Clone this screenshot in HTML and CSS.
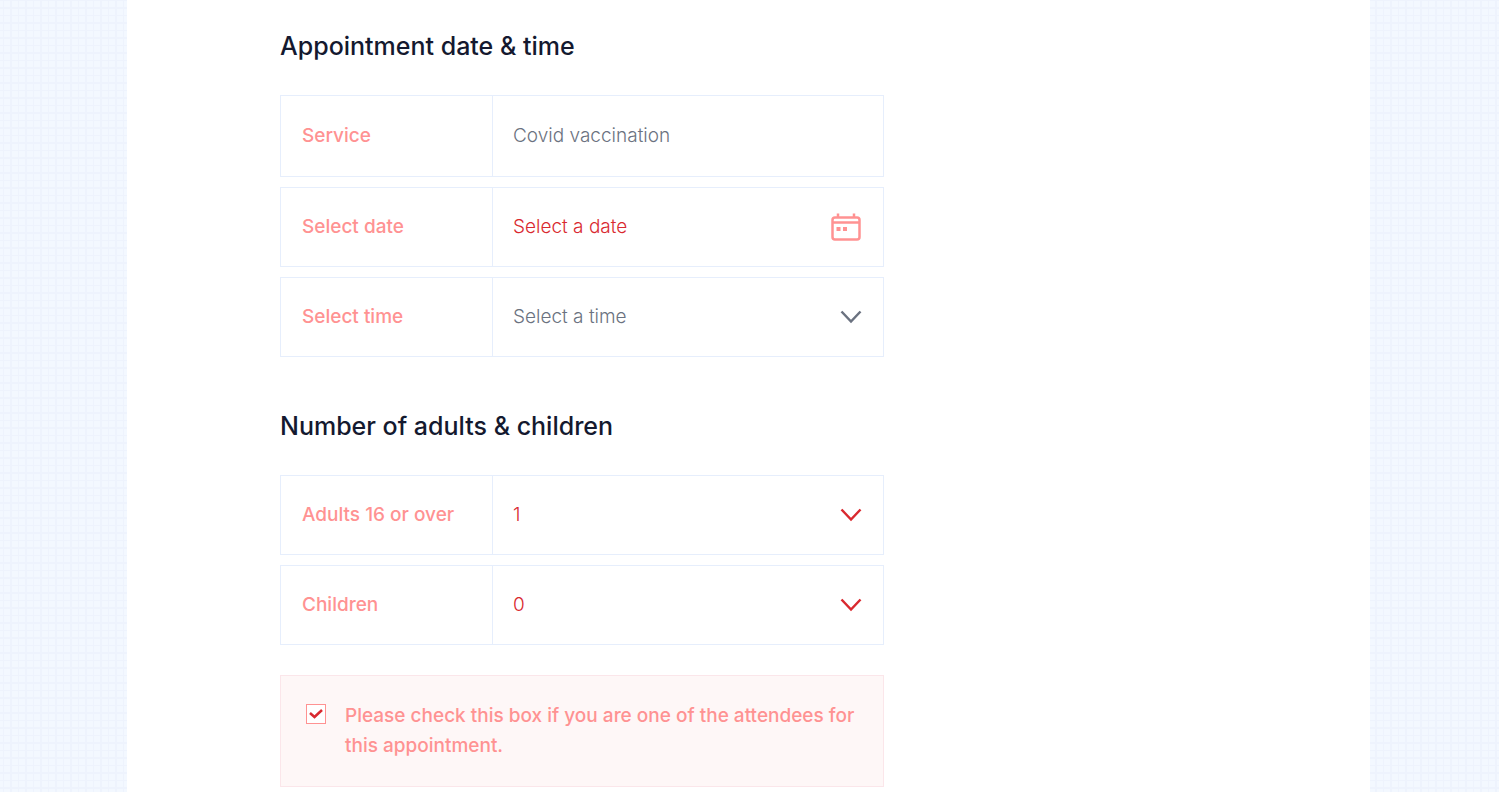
FILE: index.html
```html
<!DOCTYPE html>
<html lang="en">
<head>
    <meta charset="UTF-8">
    <meta name="viewport" content="width=device-width, initial-scale=1.0">
    <title>Book Appointment</title>
    <link rel="stylesheet" href="styles.css">
</head>
<body>
    <div class="page">
        <main class="panel">
            <form id="appointmentForm" class="booking-form">
                <h2>Appointment date &amp; time</h2>
                <div class="field field-static">
                    <label for="service">Service</label>
                    <div class="control">
                        <input type="text" id="service" name="service" value="Covid vaccination" readonly>
                    </div>
                </div>
                <div class="field">
                    <label for="date">Select date</label>
                    <div class="control active">
                        <input type="text" id="date" name="date" placeholder="Select a date">
                        <svg class="icon calendar" viewBox="0 0 60 56" aria-hidden="true">
                            <rect x="3" y="9" width="54" height="44" rx="5" />
                            <path d="M3 19h54M14 1v8M46 1v8" />
                            <path class="dots" d="M11 28h8v8h-8zM24 28h8v8h-8z" />
                        </svg>
                    </div>
                </div>
                <div class="field">
                    <label for="time">Select time</label>
                    <div class="control">
                        <select id="time" name="time">
                            <option>Select a time</option>
                        </select>
                        <svg class="icon chevron" viewBox="0 0 44 28" aria-hidden="true"><path d="M3 3L22 23L41 3" /></svg>
                    </div>
                </div>

                <h2>Number of adults &amp; children</h2>
                <div class="field">
                    <label for="adults">Adults 16 or over</label>
                    <div class="control active">
                        <select id="adults" name="adults">
                            <option>1</option>
                            <option>2</option>
                            <option>3</option>
                        </select>
                        <svg class="icon chevron" viewBox="0 0 44 28" aria-hidden="true"><path d="M3 3L22 23L41 3" /></svg>
                    </div>
                </div>
                <div class="field">
                    <label for="children">Children</label>
                    <div class="control active">
                        <select id="children" name="children">
                            <option>0</option>
                            <option>1</option>
                            <option>2</option>
                        </select>
                        <svg class="icon chevron" viewBox="0 0 44 28" aria-hidden="true"><path d="M3 3L22 23L41 3" /></svg>
                    </div>
                </div>

                <div class="notice">
                    <span class="checkbox">
                        <input type="checkbox" id="attendee" name="attendee" checked>
                        <svg viewBox="0 0 40 40" aria-hidden="true"><path d="M8 18L17 26L32 12" /></svg>
                    </span>
                    <label for="attendee">Please check this box if you are one of the attendees for this appointment.</label>
                </div>
            </form>
        </main>
    </div>
</body>
</html>
```
FILE: styles.css
```css
* {
    box-sizing: border-box;
}

body {
    margin: 0;
    background-color: #fff;
    font-family: Inter, "Liberation Sans", sans-serif;
    font-size: 19px;
    color: #6b7280;
}

/* squared paper behind the panel */
.page {
    min-height: 100vh;
    margin-right: 6px;
    padding: 0 129px 0 127px;
    background-color: #f3f8ff;
    background-image:
        linear-gradient(90deg, transparent 3px, #eef3fd 3px, #eef3fd 4px, transparent 4px, transparent 10px, #eef3fd 10px, #eef3fd 12px, transparent 12px),
        linear-gradient(#eef3fd 1px, transparent 1px, transparent 7px, #eef3fd 7px, #eef3fd 9px, transparent 9px);
    background-size: 15px 15px;
}

.panel {
    min-height: 100vh;
    padding: 26px 153px 5px;
    background-color: #fff;
}

.booking-form {
    max-width: 604px;
}

h2 {
    margin: 0 0 29px;
    font-size: 25px;
    font-weight: 500;
    line-height: 40px;
    color: #14192f;
}

.field + h2 {
    margin-top: 49px;
}

.field {
    display: flex;
    height: 80px;
    border: 1px solid #e6eefc;
}

.field-static {
    height: 82px;
}

.field + .field {
    margin-top: 10px;
}

.field label {
    display: flex;
    align-items: center;
    width: 212px;
    padding: 0 0 2px 21px;
    border-right: 1px solid #e6eefc;
    font-weight: 500;
    color: #ff9292;
}

.control {
    position: relative;
    flex: 1;
}

.control input,
.control select {
    display: block;
    width: 100%;
    height: 100%;
    margin: 0;
    padding: 0 60px 2px 20px;
    border: none;
    outline: none;
    background: none;
    appearance: none;
    font: inherit;
    font-weight: 300;
    color: #6b7280;
}

.control.active select,
.control.active input,
.control.active input::placeholder {
    color: #d9292f;
    opacity: 1;
}

.icon {
    position: absolute;
    top: 50%;
    right: 21px;
    transform: translateY(-50%);
    fill: none;
    stroke: #6b7280;
    stroke-width: 5;
    pointer-events: none;
}

.chevron {
    width: 22px;
    height: 14px;
}

.active .chevron {
    stroke: #d9292f;
}

.calendar {
    right: 22px;
    width: 30px;
    height: 28px;
}

.active .calendar {
    stroke: #ff9292;
}

.calendar .dots {
    fill: #ff9292;
    stroke: none;
}

.notice {
    display: flex;
    margin-top: 30px;
    padding: 25px 21px 25px 25px;
    border: 1px solid #fbe6ea;
    background-color: #fef7f7;
}

.notice label {
    margin-left: 19px;
    font-weight: 500;
    line-height: 30px;
    color: #ff9292;
}

.checkbox {
    position: relative;
    flex: none;
    width: 20px;
    height: 20px;
    margin-top: 3px;
}

.checkbox input {
    display: block;
    width: 20px;
    height: 20px;
    margin: 0;
    border: 1px solid #ff9292;
    background-color: #fff;
    appearance: none;
}

.checkbox svg {
    position: absolute;
    top: 0;
    left: 0;
    width: 20px;
    height: 20px;
    fill: none;
    stroke: #d9292f;
    stroke-width: 5;
    pointer-events: none;
}

.checkbox input:not(:checked) + svg {
    display: none;
}
```
